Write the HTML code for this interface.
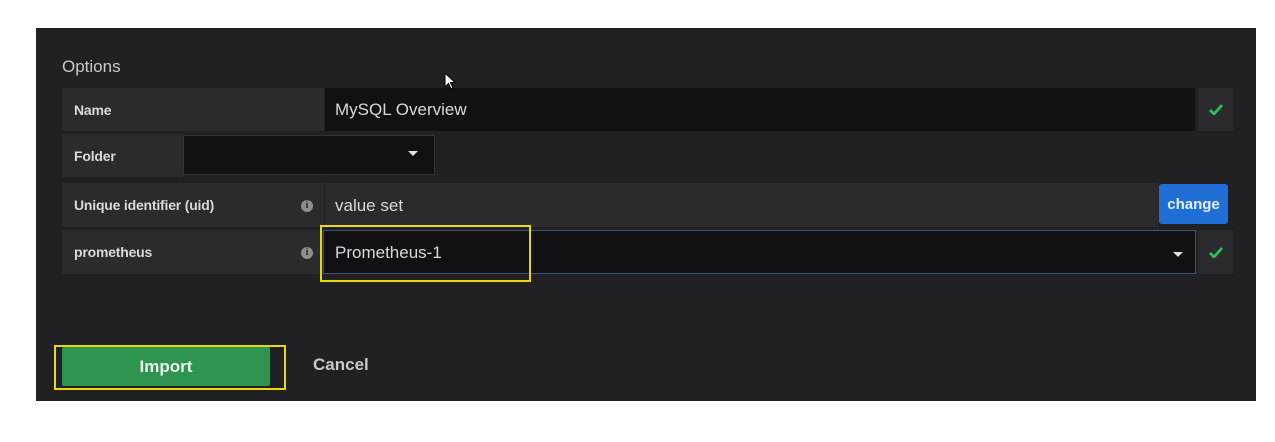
<!DOCTYPE html><html><head><style>
body{margin:0;width:1275px;height:442px;background:#fff;position:relative;overflow:hidden;font-family:"Liberation Sans",sans-serif}
.a{position:absolute;box-sizing:border-box}
.p{left:36px;top:28px;width:1220px;height:373px;background:#212124}
.lab{background:#2b2b2f;color:#d8d9da;font-size:14px;font-weight:bold;padding-left:12px;display:flex;align-items:center;letter-spacing:-0.2px}
.inp{background:#111113;color:#d8d9da;font-size:17px;padding-left:10px;display:flex;align-items:center}
.ck{background:#2b2b2f;display:flex;align-items:center;justify-content:center}
.i{width:12px;height:12px;border-radius:50%;background:#8e8e8e;color:#2b2b2f;font-size:10px;font-weight:bold;text-align:center;line-height:12px;font-family:"Liberation Serif",serif}
.tri{width:0;height:0;border-left:5px solid transparent;border-right:5px solid transparent;border-top:5px solid #e0e0e0}
</style></head><body>
<div class="a p"></div>
<div class="a" style="left:62px;top:57px;color:#c8c9ca;font-size:17px">Options</div>
<div class="a lab" style="left:62px;top:88px;width:262px;height:43px">Name</div>
<div class="a inp" style="left:325px;top:88px;width:870px;height:43px">MySQL Overview</div>
<div class="a ck" style="left:1198px;top:88px;width:35px;height:43px"><svg width="14" height="11" viewBox="0 0 14 11"><path d="M1 6L5 10L13 1" fill="none" stroke="#2fbf55" stroke-width="2.8"/></svg></div>
<div class="a lab" style="left:62px;top:134px;width:121px;height:43px">Folder</div>
<div class="a" style="left:183px;top:135px;width:252px;height:40px;background:#111113;border:1px solid #333"></div>
<div class="a tri" style="left:408px;top:151px"></div>
<div class="a lab" style="left:62px;top:183px;width:262px;height:44px">Unique identifier (uid)</div>
<div class="a i" style="left:301px;top:200px">i</div>
<div class="a inp" style="left:325px;top:183px;width:834px;height:44px;background:#2b2b2f;padding-top:2px">value set</div>
<div class="a" style="left:1159px;top:184px;width:69px;height:40px;background:#1f6fd6;border-radius:3px;color:#e8eefa;font-size:15px;font-weight:bold;display:flex;align-items:center;justify-content:center">change</div>
<div class="a lab" style="left:62px;top:230px;width:262px;height:44px">prometheus</div>
<div class="a i" style="left:301px;top:247px">i</div>
<div class="a inp" style="left:323px;top:230px;width:873px;height:44px;border:1px solid #3b5478;padding-left:11px;padding-top:2px">Prometheus-1</div>
<div class="a tri" style="left:1173px;top:252px"></div>
<div class="a ck" style="left:1198px;top:230px;width:35px;height:44px"><svg width="14" height="11" viewBox="0 0 14 11"><path d="M1 6L5 10L13 1" fill="none" stroke="#2fbf55" stroke-width="2.8"/></svg></div>
<div class="a" style="left:320px;top:225px;width:211px;height:57px;border:2px solid #e8d90f"></div>
<div class="a" style="left:62px;top:347px;width:208px;height:39px;background:#2f9450;border-radius:2px;color:#eaf5ec;font-size:17px;font-weight:bold;display:flex;align-items:center;justify-content:center">Import</div>
<div class="a" style="left:54px;top:345px;width:232px;height:45px;border:2px solid #e8d90f"></div>
<div class="a" style="left:313px;top:355px;color:#c8c9ca;font-size:17px;font-weight:bold">Cancel</div>
<svg class="a" style="left:444px;top:72px" width="12" height="18" viewBox="0 0 12 18"><path d="M1 1V15L4.5 11.5L7 17L9 16L6.5 10.5H11Z" fill="#fff" stroke="#000" stroke-width="1"/></svg>
</body></html>
